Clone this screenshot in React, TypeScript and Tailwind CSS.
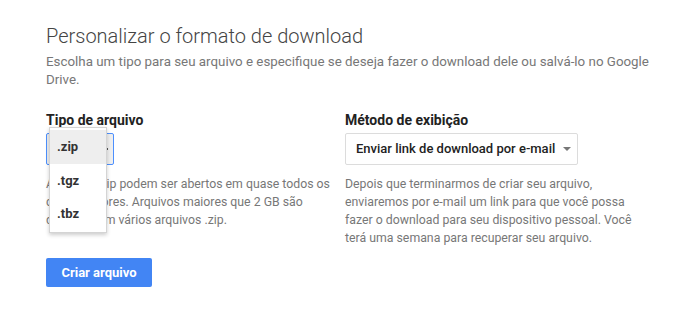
import React from "react";

export default function App() {
  return (
    <div className="w-[695px] h-[315px] bg-white" style={{ fontFamily: "Roboto, 'Noto Sans', sans-serif" }}>
      <div className="pl-[46px] pt-[23px] w-[660px]">
        <h1 className="text-[20px] leading-[26px] font-light text-[#444]">Personalizar o formato de download</h1>
        <p className="mt-[4px] text-[13.35px] leading-[18px] text-[#777] w-[612px]">
          Escolha um tipo para seu arquivo e especifique se deseja fazer o download dele ou salvá-lo no Google Drive.
        </p>
        <div className="mt-[22px] grid grid-cols-[299px_300px]">
          <div>
            <div className="text-[14px] leading-[18px] font-bold text-[#222]">Tipo de arquivo</div>
            <div className="relative mt-[4px] h-[32px]">
              <div className="w-[68px] h-[32px] rounded-[2px] border border-[#4d90fe] bg-[#eeeeee] flex items-center justify-end pr-[5px]">
                <div className="w-[2px] h-[2px] bg-[#555]" />
              </div>
              <div className="absolute left-[3px] top-[-6px] w-[58px] bg-white border border-[#d4d4d4] shadow-[0_2px_4px_rgba(0,0,0,0.2)] py-[2px] flex flex-col">
                <div className="h-[34px] bg-[#eeeeee] flex items-center pl-[7px] text-[13px] font-bold text-[#333]">.zip</div>
                <div className="h-[33px] flex items-center pl-[7px] text-[13px] font-bold text-[#333]">.tgz</div>
                <div className="h-[33px] flex items-center pl-[7px] text-[13px] font-bold text-[#333]">.tbz</div>
              </div>
            </div>
            <p className="mt-[10px] text-[12.3px] leading-[18px] text-[#777] w-[292px]">
              Arquivos .zip podem ser abertos em quase todos os computadores. Arquivos maiores que 2 GB são divididos em vários arquivos .zip.
            </p>
          </div>
          <div>
            <div className="text-[14px] leading-[18px] font-bold text-[#222]">Método de exibição</div>
            <div className="mt-[4px] w-[233px] h-[32px] rounded-[2px] border border-[#dcdcdc] flex items-center justify-between pl-[10px] pr-[6px]">
              <span className="text-[13px] font-medium text-[#222]">Enviar link de download por e-mail</span>
              <svg width="8" height="4" viewBox="0 0 8 4"><path d="M0 0 L8 0 L4 4 Z" fill="#777" /></svg>
            </div>
            <p className="mt-[10px] text-[12.3px] leading-[18px] text-[#777] w-[292px]">
              Depois que terminarmos de criar seu arquivo, enviaremos por e-mail um link para que você possa fazer o download para seu dispositivo pessoal. Você terá uma semana para recuperar seu arquivo.
            </p>
          </div>
        </div>
        <button className="mt-[11px] w-[106px] h-[29px] rounded-[2px] bg-[#4285f4] text-white text-[13px] font-bold">
          Criar arquivo
        </button>
      </div>
    </div>
  );
}
